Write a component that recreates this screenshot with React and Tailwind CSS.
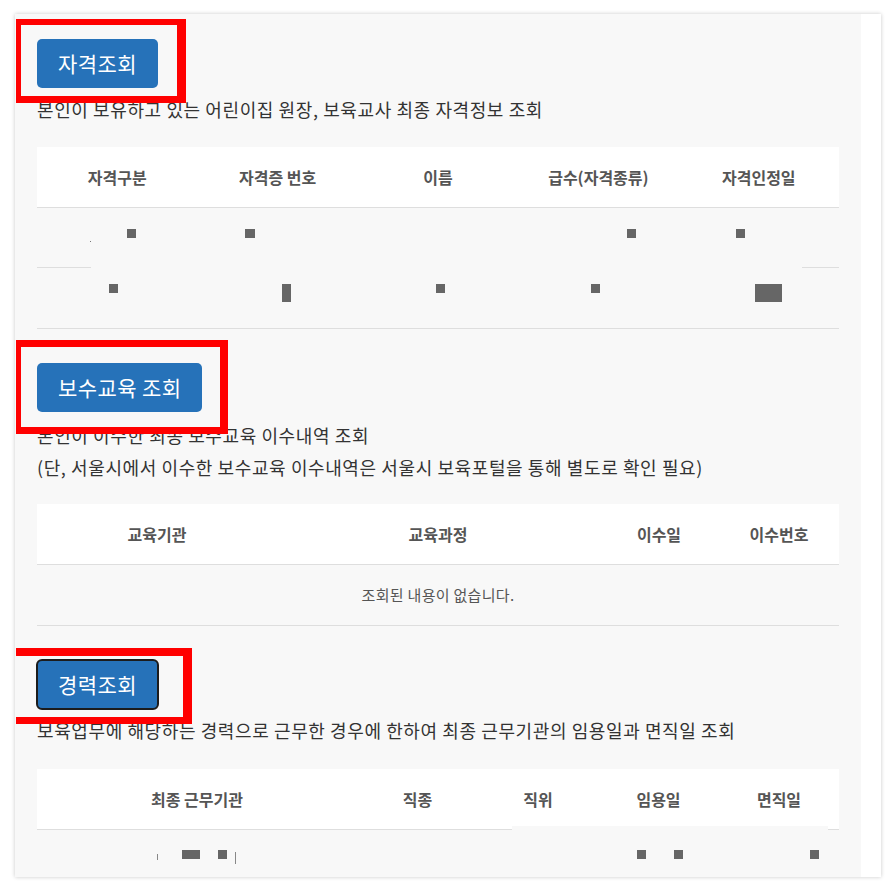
import React from "react";

const FONT = "font-['Noto_Sans_CJK_KR','Noto_Sans',sans-serif]";

function Mark({ left, top, w = 9, h = 9, color = "bg-[#666]" }) {
  return (
    <span
      className={`absolute ${color}`}
      style={{ left, top, width: w, height: h }}
    />
  );
}

function QueryButton({ label, box, focused }) {
  return (
    <div className="relative z-10 h-[49px]">
      <button
        className={`h-[49px] rounded-[5px] bg-[#2672b9] px-[21px] text-[21px] leading-none tracking-[0.4px] text-white ${
          focused ? "outline-2 outline-[#1c1c1c] -outline-offset-1" : ""
        }`}
      >
        {label}
      </button>
      {/* red annotation box */}
      <div className={`pointer-events-none absolute border-[#ff0000] ${box}`} />
    </div>
  );
}

function HeaderRow({ cols, titles }) {
  return (
    <div className={`grid ${cols} h-[61px] items-center border-b border-[#dedede] bg-white text-[16px] font-bold text-[#555]`}>
      {titles.map((t) => (
        <div key={t} className="text-center">{t}</div>
      ))}
    </div>
  );
}

export default function App() {
  return (
    <div className={`min-h-screen bg-white pl-[15px] pt-[14px] ${FONT}`}>
      <div className="flex h-[863px] w-[866px] overflow-hidden shadow-[0_0_4px_rgba(0,0,0,0.22)]">
        <div className="w-[846px] bg-[#f8f8f8] pl-[22px] pt-[25px]">

          {/* 자격조회 */}
          <QueryButton
            label="자격조회"
            box="left-[-21px] top-[-20px] h-[84px] w-[170px] border-l-[5px] border-t-[6px] border-r-[9px] border-b-[7px]"
          />
          <p className="mt-[5px] text-[18px] leading-[32px] tracking-[0.6px] text-[#333]">
            본인이 보유하고 있는 어린이집 원장, 보육교사 최종 자격정보 조회
          </p>
          <div className="mt-[22px] w-[802px]">
            <HeaderRow
              cols="grid-cols-5"
              titles={["자격구분", "자격증 번호", "이름", "급수(자격종류)", "자격인정일"]}
            />
            <div className="relative h-[60px]">
              <Mark left={90} top={21} />
              <Mark left={208} top={21} w={10} />
              <Mark left={590} top={21} />
              <Mark left={699} top={21} />
              <Mark left={53} top={33} w={1} h={1} color="bg-[#777]" />
              <div className="absolute bottom-0 left-0 h-px w-[54px] bg-[#dedede]" />
              <div className="absolute bottom-0 right-0 h-px w-[37px] bg-[#dedede]" />
            </div>
            <div className="relative h-[61px] border-b border-[#dedede]">
              <Mark left={72} top={16} />
              <Mark left={245} top={16} h={18} />
              <Mark left={399} top={16} />
              <Mark left={554} top={16} />
              <Mark left={718} top={16} w={27} h={18} />
            </div>
          </div>

          {/* 보수교육 조회 */}
          <div className="mt-[34px]">
            <QueryButton
              label="보수교육 조회"
              box="left-[-21px] top-[-23px] h-[94px] w-[212px] border-l-[5px] border-t-[7px] border-r-[8px] border-b-[7px]"
            />
          </div>
          <div className="mt-[7px] text-[18px] leading-[32px] tracking-[0.6px] text-[#333]">
            <p>본인이 이수한 최종 보수교육 이수내역 조회</p>
            <p>(단, 서울시에서 이수한 보수교육 이수내역은 서울시 보육포털을 통해 별도로 확인 필요)</p>
          </div>
          <div className="mt-[21px] w-[802px]">
            <HeaderRow
              cols="grid-cols-[240px_322px_120px_120px]"
              titles={["교육기관", "교육과정", "이수일", "이수번호"]}
            />
            <div className="flex h-[61px] items-center justify-center border-b border-[#dedede] text-[15px] tracking-[0.3px] text-[#555]">
              조회된 내용이 없습니다.
            </div>
          </div>

          {/* 경력조회 */}
          <div className="mt-[34px]">
            <QueryButton
              label="경력조회"
              focused
              box="left-[-21px] top-[-12px] h-[76px] w-[176px] border-t-[8px] border-r-[9px] border-b-[7px]"
            />
          </div>
          <p className="mt-[5px] text-[18px] leading-[32px] tracking-[0.6px] text-[#333]">
            보육업무에 해당하는 경력으로 근무한 경우에 한하여 최종 근무기관의 임용일과 면직일 조회
          </p>
          <div className="mt-[23px] w-[802px]">
            <div className="relative">
              <HeaderRow
                cols="grid-cols-[320px_121px_120px_121px_120px]"
                titles={["최종 근무기관", "직종", "직위", "임용일", "면직일"]}
              />
              <div className="absolute bottom-0 left-[475px] h-[4px] w-[316px] bg-[#f8f8f8]" />
            </div>
            <div className="relative h-[60px]">
              <Mark left={120} top={24} w={1} h={6} color="bg-[#888]" />
              <Mark left={145} top={20} w={18} />
              <Mark left={181} top={20} />
              <Mark left={198} top={22} w={1} h={12} color="bg-[#888]" />
              <Mark left={600} top={20} />
              <Mark left={637} top={20} />
              <Mark left={773} top={20} />
            </div>
          </div>
        </div>
        <div className="w-[20px] bg-white" />
      </div>
    </div>
  );
}
